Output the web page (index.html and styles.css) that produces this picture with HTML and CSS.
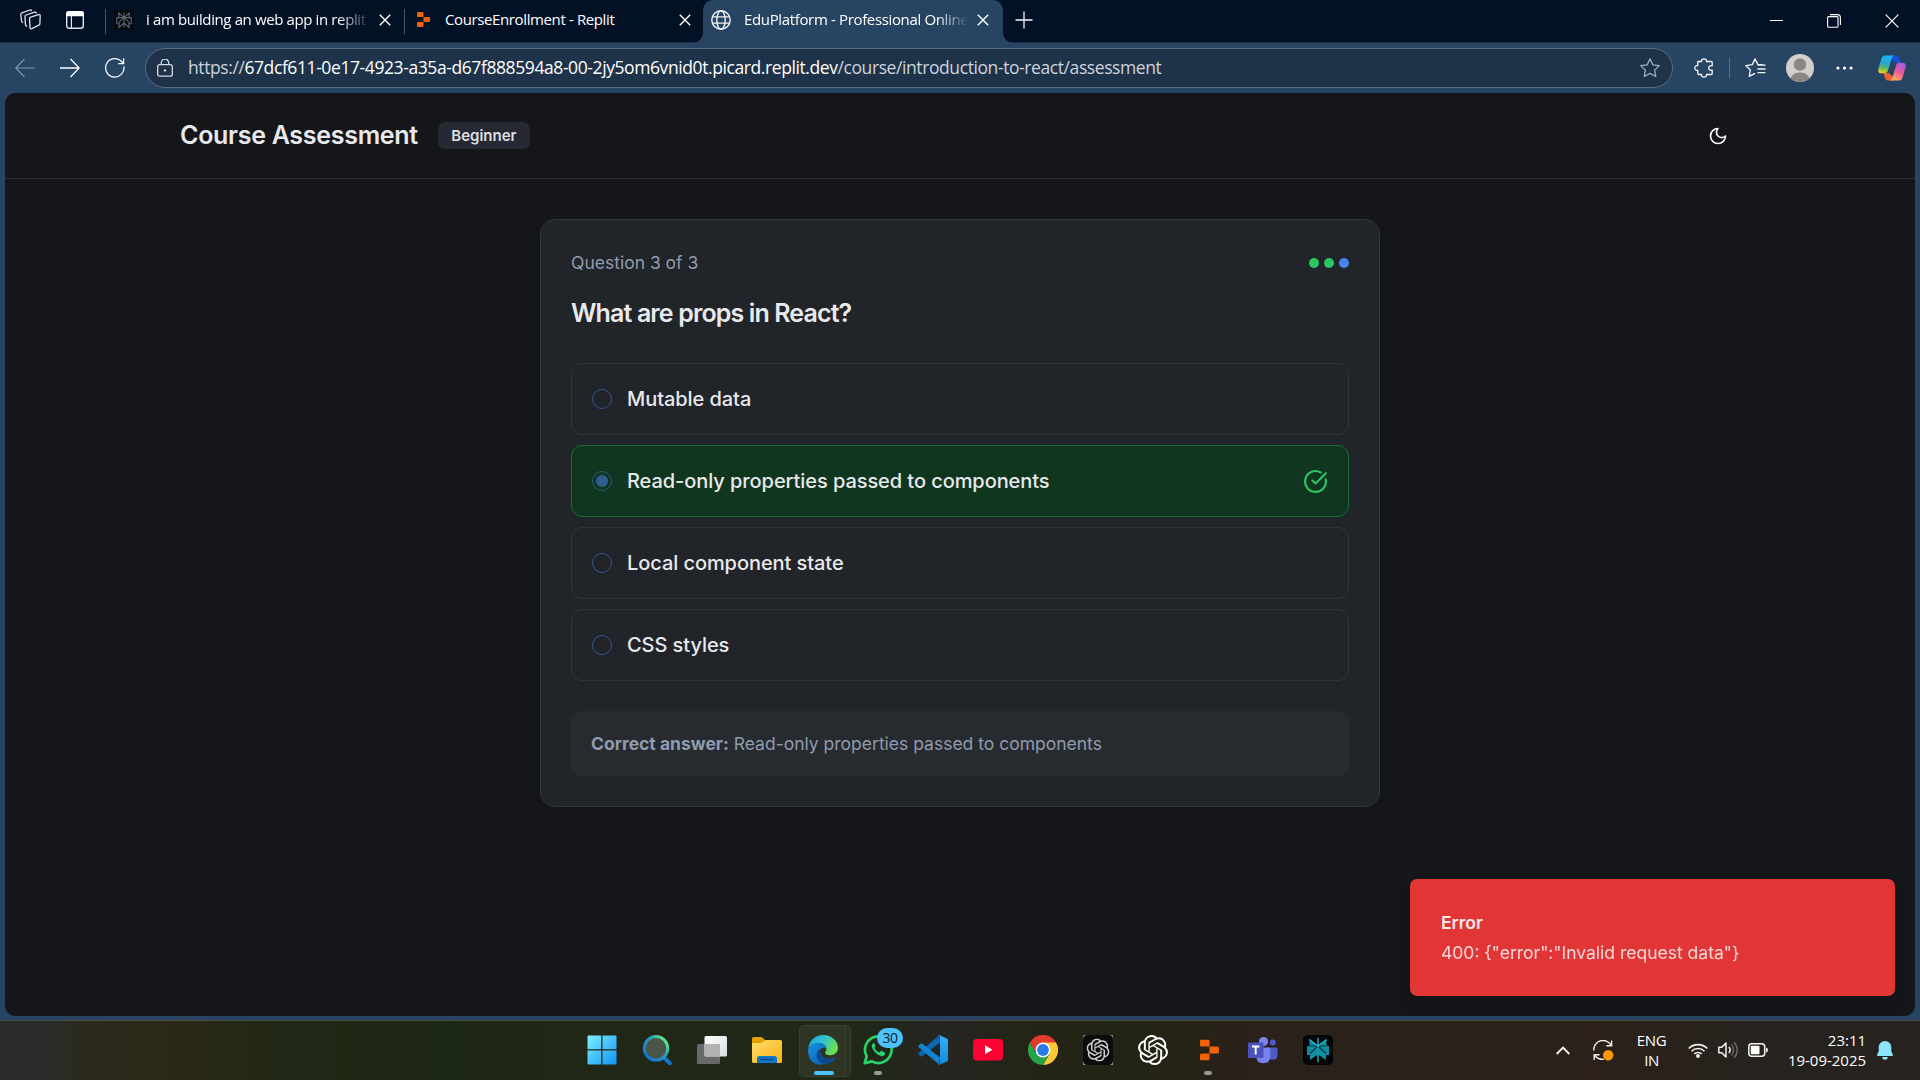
FILE: index.html
```html
<!DOCTYPE html>
<html lang="en">
<head>
<meta charset="utf-8">
<title>EduPlatform - Professional Online Learning</title>
<link rel="stylesheet" href="styles.css">
</head>
<body>
<svg class="defs" width="0" height="0" aria-hidden="true">
  <defs>
    <symbol id="x" viewBox="0 0 12 12"><path d="M.8.8l10.400 10.400M11.200.8L.8 11.200" fill="none" stroke="currentColor" stroke-width="1.400"/></symbol>
    <symbol id="replit" viewBox="0 0 19 21"><path d="M1.500 0H8a1.500 1.500 0 0 1 1.500 1.500V7H1.500A1.500 1.500 0 0 1 0 5.500v-4A1.500 1.500 0 0 1 1.500 0zM9.500 7h8A1.500 1.500 0 0 1 19 8.500v4a1.500 1.500 0 0 1-1.500 1.500h-8zM1.500 14h8v5.500A1.500 1.500 0 0 1 8 21H1.500A1.500 1.500 0 0 1 0 19.500v-4A1.500 1.500 0 0 1 1.500 14z" fill="#f26207"/></symbol>
    <symbol id="knot" viewBox="0 0 24 24"><path fill="currentColor" d="M22.2819 9.8211a5.9847 5.9847 0 0 0-.5157-4.9108 6.0462 6.0462 0 0 0-6.5098-2.9A6.0651 6.0651 0 0 0 4.9807 4.1818a5.9847 5.9847 0 0 0-3.9977 2.9 6.0462 6.0462 0 0 0 .7427 7.0966 5.98 5.98 0 0 0 .511 4.9107 6.051 6.051 0 0 0 6.5146 2.9001A5.9847 5.9847 0 0 0 13.2599 24a6.0557 6.0557 0 0 0 5.7718-4.2058 5.9894 5.9894 0 0 0 3.9977-2.9001 6.0557 6.0557 0 0 0-.7475-7.0729zm-9.022 12.6081a4.4755 4.4755 0 0 1-2.8764-1.0408l.1419-.0804 4.7783-2.7582a.7948.7948 0 0 0 .3927-.6813v-6.7369l2.02 1.1686a.071.071 0 0 1 .038.052v5.5826a4.504 4.504 0 0 1-4.4945 4.4944zm-9.6607-4.1254a4.4708 4.4708 0 0 1-.5346-3.0137l.142.0852 4.783 2.7582a.7712.7712 0 0 0 .7806 0l5.8428-3.3685v2.3324a.0804.0804 0 0 1-.0332.0615L9.74 19.9502a4.4992 4.4992 0 0 1-6.1408-1.6464zM2.3408 7.8956a4.485 4.485 0 0 1 2.3655-1.9728V11.6a.7664.7664 0 0 0 .3879.6765l5.8144 3.3543-2.0201 1.1685a.0757.0757 0 0 1-.071 0l-4.8303-2.7865A4.504 4.504 0 0 1 2.3408 7.872zm16.5963 3.8558L13.1038 8.364 15.1192 7.2a.0757.0757 0 0 1 .071 0l4.8303 2.7913a4.4944 4.4944 0 0 1-.6765 8.1042v-5.6772a.79.79 0 0 0-.407-.667zm2.0107-3.0231l-.142-.0852-4.7735-2.7818a.7759.7759 0 0 0-.7854 0L9.409 9.2297V6.8974a.0662.0662 0 0 1 .0284-.0615l4.8303-2.7866a4.4992 4.4992 0 0 1 6.6802 4.66zM8.3065 12.863l-2.02-1.1638a.0804.0804 0 0 1-.038-.0567V6.0742a4.4992 4.4992 0 0 1 7.3757-3.4537l-.142.0805L8.704 5.459a.7948.7948 0 0 0-.3927.6813zm1.0976-2.3654l2.602-1.4998 2.6069 1.4998v2.9994l-2.5974 1.4997-2.6067-1.4997Z"/></symbol>
  </defs>
</svg>

<header class="tabstrip">
  <svg class="workspaces" width="21" height="21" viewBox="0 0 21 21" fill="none" stroke="#dde3ea" stroke-width="1.300" stroke-linejoin="round" stroke-linecap="round"><path d="M9.500 9.700q0-1.200 1.100-1.500l8.100-2.600q1.600-.3 1.500 1l-.3 7.800q0 1.200-1.100 1.700l-6.800 3.500q-2 .7-2-1z"/><path d="M6.600 17.200q-1.200-.6-1.200-2L5 7.600q0-1.200 1.100-1.600l8.600-2.800q1.200-.3 1.600.8"/><path d="M2.500 13.500q-1-.5-1-1.700L.8 5.500q0-1.200 1.100-1.600L10 1q1.200-.3 1.600.7"/></svg>
  <svg class="tabmenu" width="18" height="18" viewBox="0 0 18 18"><rect x=".7" y=".7" width="16.600" height="16.600" rx="2.500" fill="none" stroke="#dfe5ec" stroke-width="1.400"/><path d="M0 5.300V3a3 3 0 0 1 3-3h12a3 3 0 0 1 3 3v2.300z" fill="#fff"/><path d="M5.400 5v12" stroke="#dfe5ec" stroke-width="1.200"/></svg>
  <i class="sep"></i>
  <div class="tab tab-first">
    <svg class="favicon" width="20" height="20" viewBox="0 0 20 20"><rect width="20" height="20" rx="1.500" fill="#060a11"/><path d="M10 2.500v15M4.800 3l5.200 4.600L15.200 3v4.600H4.800zM2.800 7.600h14.400v6.200h-2.300M2.800 7.600v6.200h2.300M10 7.600l-4.900 4.600v5.200L10 13M10 7.600l4.900 4.600v5.200L10 13" fill="none" stroke="#5f646b" stroke-width="1.100"/></svg>
    <span class="tab-title fade t1">i am building an web app in replit</span>
    <svg class="close" width="12" height="12"><use href="#x"/></svg>
  </div>
  <i class="sep"></i>
  <div class="tab tab-second">
    <svg class="favicon" width="13" height="15" viewBox="0 0 19 21" preserveAspectRatio="none"><use href="#replit" width="19" height="21"/></svg>
    <span class="tab-title t2">CourseEnrollment - Replit</span>
    <svg class="close" width="12" height="12"><use href="#x"/></svg>
  </div>
  <div class="tab tab-active">
    <svg class="favicon" width="20" height="20" viewBox="0 0 20 20" fill="none" stroke="#f0f3f6" stroke-width="1.400"><circle cx="10" cy="10" r="9.200"/><ellipse cx="10" cy="10" rx="4.200" ry="9.200"/><path d="M1.600 6.900h16.800M1.600 13.100h16.800"/></svg>
    <span class="tab-title fade t3">EduPlatform - Professional Online</span>
    <svg class="close" width="12" height="12"><use href="#x"/></svg>
  </div>
  <svg class="newtab" width="18" height="18" viewBox="0 0 18 18"><path d="M9 .5v17M.5 9h17" stroke="#f2f5f8" stroke-width="1.300"/></svg>
  <div class="window-buttons">
    <svg width="13" height="13" viewBox="0 0 13 13"><path d="M0 5.500h13" stroke="#fff" stroke-width="1"/></svg>
    <svg width="14" height="14" viewBox="0 0 14 14" fill="none" stroke="#fff"><rect x=".6" y="2.600" width="10.400" height="10.600" rx="1" stroke-width="1.100"/><path d="M3 .6h7.400a3 3 0 0 1 3 3V11" stroke-width="1.100"/></svg>
    <svg width="14" height="14" viewBox="0 0 14 14"><path d="M.7.7l12.600 12.600M13.300.7L.7 13.300" stroke="#fff" stroke-width="1.200"/></svg>
  </div>
</header>

<nav class="toolbar">
  <svg width="20" height="20" viewBox="0 0 20 20" fill="none" stroke="#7e93a6" stroke-width="1.200"><path d="M9.500 1L.8 10l8.700 9M.8 10H20"/></svg>
  <svg width="20" height="20" viewBox="0 0 20 20" fill="none" stroke="#fff" stroke-width="1.300"><path d="M10.500 1l8.700 9-8.700 9M19.200 10H0"/></svg>
  <svg width="20" height="20" viewBox="0 0 20 20" fill="none" stroke="#f5f7f9" stroke-width="1.300"><path d="M18.900 8.300A9.200 9.200 0 1 1 15.500 2.600l2.700 2.700M18.600.2v5.400h-5.400"/></svg>
  <div class="address">
    <svg width="16" height="18" viewBox="0 0 16 18" fill="none" stroke="#d4dae1" stroke-width="1.300"><rect x=".7" y="5.700" width="14.600" height="11.500" rx="2"/><path d="M4.300 5.500V3.800a3.500 3.500 0 0 1 7.400 0v1.700"/><circle cx="8" cy="11.400" r="1.200" fill="#d4dae1" stroke="none"/></svg>
    <span class="url"><span class="dim">https://</span>67dcf611-0e17-4923-a35a-d67f888594a8-00-2jy5om6vnid0t.picard.replit.dev<span class="dim">/course/introduction-to-react/assessment</span></span>
    <svg class="star" width="20" height="20" viewBox="0 0 20 20" fill="none" stroke="#a3adb9" stroke-width="1.300" stroke-linejoin="round"><path d="M10 .9l2.800 5.900 6.500.8-4.700 4.500 1.200 6.400L10 15.400l-5.800 3.100 1.200-6.400L.7 7.600l6.500-.8z"/></svg>
  </div>
  <svg class="puzzle" width="20" height="20" viewBox="0 0 20 20" fill="none" stroke="#f2f5f8" stroke-width="1.300" stroke-linejoin="round"><path d="M3.800 3.500h3.700C7.300 1.600 8.500.8 10 .8s2.700.8 2.500 2.700h4.700q1 0 1 1v3.300c-2-.4-3.500.5-3.500 2.200s1.500 2.600 3.500 2.200v3.300q0 1-1 1h-4.700c.2 1.900-1 2.700-2.500 2.700s-2.700-.8-2.500-2.700H4.800q-1 0-1-1v-3c-2 .2-3-1-3-2.500s1-2.700 3-2.500z"/></svg>
  <i class="tool-sep"></i>
  <svg class="favs" width="21" height="20" viewBox="0 0 21 20" fill="none" stroke="#f2f5f8" stroke-width="1.300" stroke-linejoin="round"><path d="M18.500 6.800l-5.700-.4L10 .9 7.300 6.600.7 7.600l4.700 4.300-1.100 6.500 5.700-3M12.500 7.200h8M12.500 11h8M12.500 14.600h8"/></svg>
  <svg class="avatar" width="28" height="28" viewBox="0 0 28 28"><defs><clipPath id="av"><circle cx="14" cy="14" r="14"/></clipPath></defs><g clip-path="url(#av)"><path fill="#d1cfcd" d="M0 0h28v28H0z"/><circle cx="14" cy="10.500" r="6.200" fill="#8b8683"/><ellipse cx="14" cy="27" rx="10.200" ry="8.500" fill="#8b8683"/></g></svg>
  <svg class="more" width="17" height="4" viewBox="0 0 17 4" fill="#fff"><circle cx="1.900" cy="2" r="1.600"/><circle cx="8.500" cy="2" r="1.600"/><circle cx="15.100" cy="2" r="1.600"/></svg>
  <svg class="copilot" width="28" height="26" viewBox="0 0 28 26">
    <defs>
      <linearGradient id="ca" x1=".4" y1="0" x2=".2" y2="1"><stop stop-color="#17b3f5"/><stop offset=".45" stop-color="#2aa7c9"/><stop offset=".7" stop-color="#67bb58"/><stop offset="1" stop-color="#f8d21c"/></linearGradient>
      <linearGradient id="cb" x1=".8" y1="0" x2=".4" y2="1"><stop stop-color="#9d5be8"/><stop offset=".5" stop-color="#ea57a0"/><stop offset="1" stop-color="#ffab5c"/></linearGradient>
    </defs>
    <path d="M13 .5h5q2.300 0 3 2.200L22.600 8H18l-6-5z" fill="#1d50d6"/>
    <path d="M15 25.500h-5q-2.200 0-2.800-2.200L5.500 18H11l4 4z" fill="#f2612c"/>
    <path d="M6.500.5h10q-2 .3-2.700 2.600l-4 13Q9.100 18.200 7 18.300H3.500Q-.5 18.200.4 14L3.300 4Q4.200.6 6.500.5z" fill="url(#ca)"/>
    <path d="M21.500 25.500h-10q2-.3 2.700-2.600l4-13q.7-2.100 2.800-2.200h3.500q4 .1 3.100 4.300L24.700 22q-.9 3.400-3.200 3.500z" fill="url(#cb)"/>
  </svg>
</nav>

<main class="frame">
  <div class="page">
    <div class="page-header">
      <h1>Course Assessment</h1>
      <span class="level">Beginner</span>
      <svg class="moon" width="20" height="20" viewBox="0 0 24 24" fill="none" stroke="#f4f5f7" stroke-width="2" stroke-linecap="round" stroke-linejoin="round"><path d="M12 3a6 6 0 0 0 9 9 9 9 0 1 1-9-9Z"/></svg>
    </div>
    <section class="card">
      <div class="progress">
        <span>Question 3 of 3</span>
        <div class="dots"><i class="dot done"></i><i class="dot done"></i><i class="dot current"></i></div>
      </div>
      <h2>What are props in React?</h2>
      <div class="options">
        <div class="option"><i class="radio"></i><span>Mutable data</span></div>
        <div class="option correct"><i class="radio checked"></i><span>Read-only properties passed to components</span>
          <svg class="tick" width="25" height="25" viewBox="0 0 24 24" fill="none" stroke="#2cc765" stroke-width="2" stroke-linecap="round" stroke-linejoin="round"><path d="M21.801 10A10 10 0 1 1 17 3.335"/><path d="m9 11 3 3L22 4"/></svg>
        </div>
        <div class="option"><i class="radio"></i><span>Local component state</span></div>
        <div class="option"><i class="radio"></i><span>CSS styles</span></div>
      </div>
      <p class="answer"><strong>Correct answer:</strong> Read-only properties passed to components</p>
    </section>
    <div class="toast" role="alert">
      <div class="toast-title">Error</div>
      <div class="toast-text">400: {"error":"Invalid request data"}</div>
    </div>
  </div>
</main>

<footer class="taskbar">
  <div class="apps">
    <div class="app"><svg width="30" height="30" viewBox="0 0 30 30"><defs><linearGradient id="win" x1="0" y1="0" x2="1" y2="1"><stop stop-color="#7df0ff"/><stop offset="1" stop-color="#0f93f5"/></linearGradient></defs><path d="M1.500.5H14.300V14.300H.5V1.500a1 1 0 0 1 1-1zM15.500.5h13a1 1 0 0 1 1 1v12.800h-14zM.5 15.500h13.800v14H1.500a1 1 0 0 1-1-1zM15.500 15.500h14v13a1 1 0 0 1-1 1h-13z" fill="url(#win)"/></svg></div>
    <div class="app"><svg width="30" height="30" viewBox="0 0 30 30"><defs><linearGradient id="se" x1="1" y1="0" x2=".1" y2=".8"><stop offset=".1" stop-color="#6df08a"/><stop offset=".45" stop-color="#2a9fb9"/><stop offset="1" stop-color="#1279da"/></linearGradient></defs><path d="M21.500 22l6.300 6.300" stroke="#1773c9" stroke-width="4" stroke-linecap="round"/><circle cx="14" cy="13.300" r="11.700" fill="#4b5547" stroke="url(#se)" stroke-width="3"/></svg></div>
    <div class="app"><svg width="30" height="30" viewBox="0 0 30 30"><defs><linearGradient id="tv" x1="0" y1="0" x2="1" y2="1"><stop stop-color="#fff"/><stop offset="1" stop-color="#dcdcdc"/></linearGradient></defs><rect y="9" width="23" height="20" rx="1.500" fill="#69686a"/><rect x="7.500" y="1" width="22.500" height="20.500" rx="1.500" fill="url(#tv)"/><path d="M7.500 9H23v12.500H9q-1.500 0-1.500-1.500z" fill="#b3b2b3"/></svg></div>
    <div class="app"><svg width="30" height="30" viewBox="0 0 30 30"><defs><linearGradient id="fo" x1="0" y1="0" x2="1" y2="1"><stop stop-color="#ffdc6b"/><stop offset="1" stop-color="#f8b216"/></linearGradient></defs><path d="M0 3.500Q0 2 1.500 2H9q1 0 1.700.7L13 5v5H0z" fill="#e0a000"/><path d="M0 8h8.500q1.500 0 2.500-1l1.500-1.400q.6-.6 1.500-.6h14.500Q30 5 30 6.500v20q0 1.500-1.500 1.500h-27Q0 28 0 26.500z" fill="url(#fo)"/><path d="M5 28v-4.500Q5 21 7.500 21h15q2.500 0 2.500 2.500V28z" fill="#1276c6"/><path d="M8.500 24.500h13" stroke="#064b88" stroke-width="1.400" stroke-linecap="round"/></svg></div>
    <div class="app running active"><svg width="30" height="30" viewBox="0 0 30 30"><defs><linearGradient id="ea" x1="0" y1="0" x2="1" y2=".5"><stop stop-color="#1b9de2"/><stop offset=".5" stop-color="#2fc4d2"/><stop offset="1" stop-color="#6ae04e"/></linearGradient><linearGradient id="eb" x1="0" y1="0" x2="1" y2="1"><stop stop-color="#1593e4"/><stop offset="1" stop-color="#0c59a4"/></linearGradient></defs><path d="M.3 13.500C1.200 5.500 7.300.1 15 .1c8.700 0 15 6.200 15 12.700 0 4.800-3.700 7.400-7.700 7.400-3.500 0-5.300-1.100-5.300-2.400 0-.9 1.400-1.400 1.400-3.800 0-3.300-3-6-7.600-6C6.200 8 2 10.300.3 13.500z" fill="url(#ea)"/><path d="M.1 15.500C.1 11.500 4.800 8 10.500 8c4.800 0 7.900 2.700 7.900 6-1.500-2.400-6.800-1.500-7.500 3.500-.5 5 3.600 9.900 10.600 8.700-5 4.700-12.500 4.600-17 .6C1.600 24.100 0 19.800.1 15.500z" fill="url(#eb)"/><path d="M12.300 13.500c-3.600 2.600-5.100 7.300-2.500 11.300 3.600 5.400 12.300 5.500 17.800-1.300.7-.9-.1-1.500-1-1-5.200 2.500-14.700 1.600-14.300-9z" fill="#114a91"/></svg></div>
    <div class="app idle"><svg width="30" height="30" viewBox="0 0 30 30" fill="none" stroke="#25d366"><path d="M1.800 28.200l1.900-7A13.300 13.300 0 1 1 9 26.400z" stroke-width="2.700" stroke-linejoin="round"/><path d="M10.200 8.200c-1.700 1-1.900 3.100-.8 5.300 1.700 3.700 5 6.700 8.800 7.600 1.900.4 3.700-.7 3.900-2.600.1-.8-.2-1-.8-1.300l-2.400-1.200c-.6-.3-1-.1-1.300.3l-1 1.200c-2.200-.8-4-2.400-5.200-4.600l.9-1.200c.2-.4.2-.7 0-1.100l-1-2.400z" fill="#25d366" stroke="none"/></svg><span class="badge">30</span></div>
    <div class="app"><svg width="30" height="30" viewBox="0 0 30 30"><defs><linearGradient id="vs" x1="0" y1="0" x2="0" y2="1"><stop stop-color="#35b1f5"/><stop offset="1" stop-color="#158bdb"/></linearGradient></defs><path d="M22 7.500L4.300 21.200q-.8.600-1.600 0L.7 19.500q-.9-.8 0-1.700L21 .5z" fill="#0b67b0"/><path d="M22 22.500L4.300 8.800q-.8-.6-1.600 0L.7 10.500q-.9.800 0 1.700L21 29.500z" fill="#1284cf"/><path d="M21.400.3l7.500 3.200q1.100.6 1.100 1.800v19.400q0 1.200-1.100 1.800l-7.500 3.200q-.8.200-1.400-.5 2 .5 2-1.700V2.500q0-2.200-2-1.700.6-.7 1.400-.5z" fill="url(#vs)"/></svg></div>
    <div class="app"><svg width="30" height="22" viewBox="0 0 30 22"><rect width="30" height="21.500" rx="4" fill="#ff0033"/><path d="M12 6.300v9l7.500-4.500z" fill="#fff"/></svg></div>
    <div class="app"><svg width="30" height="30" viewBox="0 0 30 30"><path d="M15 15L2 7.500A15 15 0 0 1 28 7.500z" fill="#e33b2e"/><path d="M15 7.500h13A15 15 0 0 1 15 30l6.500-11.300z" fill="#fcc934"/><path d="M21.500 18.700L15 30A15 15 0 0 1 2 7.500l6.500 11.200z" fill="#25a34b"/><path d="M2 7.500h13v7.500H6z" fill="#e33b2e"/><circle cx="15" cy="15" r="7.500" fill="#fff"/><circle cx="15" cy="15" r="5.900" fill="#287be9"/></svg></div>
    <div class="app"><svg width="30" height="30" viewBox="0 0 30 30" color="#cfcfcf"><path fill="#8a8a8a" d="M0 0h30v30H0z"/><rect width="30" height="30" rx="4.500" fill="#0c0c0c"/><use href="#knot" x="3.500" y="3.500" width="23" height="23"/></svg></div>
    <div class="app"><svg width="30" height="30" viewBox="0 0 24 24" color="#fff"><use href="#knot"/></svg></div>
    <div class="app idle"><svg class="replit-app" width="19" height="22" viewBox="0 0 19 21"><use href="#replit"/></svg></div>
    <div class="app"><svg width="30" height="27" viewBox="0 0 30 27"><circle cx="24.700" cy="5.500" r="3" fill="#5059c9"/><path d="M19 10.500h9.300q1.200 0 1.200 1.200v6.500q0 4.500-5 4.500-4 0-5.500-3.500z" fill="#5059c9"/><circle cx="15.500" cy="4.600" r="4.600" fill="#7b83eb"/><path d="M9 10.500h12q1.300 0 1.300 1.300v7.500q0 7-7 7t-7-7z" fill="#7b83eb"/><rect y="5.500" width="15.500" height="15.500" rx="1.300" fill="#4a52bd"/><path d="M4 9.500h7.400M7.700 9.500v8" stroke="#fff" stroke-width="1.900"/></svg></div>
    <div class="app"><svg width="30" height="30" viewBox="0 0 30 30"><rect width="30" height="30" rx="5" fill="#020406"/><path d="M6.500 4.500L15 11l8.500-6.500V11H26v9h-3v5l-8-5.500L7 25v-5H4v-9h2.500z" fill="#0d8ea1"/><path d="M15 2.500V27.500M15 11l-8 7.500M15 11l8 7.500M6.500 11h17" stroke="#04343f" stroke-width="1.200"/><path d="M6.500 4.500L15 11l8.500-6.500M15 3v24" stroke="#22c3d6" stroke-width="1.200" fill="none"/></svg></div>
  </div>
  <div class="tray">
    <svg width="14" height="9" viewBox="0 0 14 9" fill="none" stroke="#f5f5f5" stroke-width="1.800"><path d="M.7 8L7 1.500 13.300 8"/></svg>
    <svg class="sync" width="21" height="21" viewBox="0 0 21 21" fill="none" stroke="#eee" stroke-width="1.400"><path d="M.8 10.500A9.200 9.200 0 0 1 18 5.200M18.600.5v5.300h-5.300M6.500 14.700H1.200V20M1.500 15.200Q5 19.700 11 19.300"/><circle cx="15.200" cy="15.300" r="5.200" fill="#ff9a06" stroke="none"/></svg>
    <div class="lang"><span>ENG</span><span>IN</span></div>
    <svg class="wifi" width="20" height="16" viewBox="0 0 20 16" fill="none" stroke="#f2f2f2" stroke-width="1.600"><path d="M.7 6.500a13.200 13.200 0 0 1 18.600 0M3.500 9.200a9.200 9.200 0 0 1 13 0M6.200 12a5.400 5.400 0 0 1 7.600 0"/><circle cx="10" cy="14" r="1.900" fill="#fff" stroke="none"/></svg>
    <svg class="volume" width="20" height="18" viewBox="0 0 20 18" fill="none" stroke="#f2f2f2" stroke-width="1.500" stroke-linejoin="round"><path d="M.8 6.300h3L8 2v14l-4.200-4.300h-3z"/><path d="M10.800 6a4.500 4.500 0 0 1 0 6"/><path d="M13.300 3.500a8 8 0 0 1 0 11M16 1.200a11 11 0 0 1 0 15.600" stroke="#666"/></svg>
    <svg class="battery" width="20" height="14" viewBox="0 0 20 14"><rect x=".8" y=".8" width="15.900" height="12.400" rx="3" fill="none" stroke="#f2f2f2" stroke-width="1.500"/><rect x="2.700" y="2.700" width="8.800" height="8.600" rx="1" fill="#fff"/><path d="M18 4.500q2 .5 2 2.500t-2 2.500z" fill="#f2f2f2"/></svg>
    <div class="clock"><span>23:11</span><span>19-09-2025</span></div>
    <svg class="bell" width="16" height="19" viewBox="0 0 16 19" fill="#8be6fd"><path d="M8 0a6.300 6.300 0 0 1 6.300 6.300v3.900l1.600 3.500q.3 1.300-.9 1.300H1q-1.200 0-.9-1.300l1.600-3.500V6.300A6.300 6.300 0 0 1 8 0zM5.300 16h5.400a2.700 2.700 0 0 1-5.400 0z"/></svg>
  </div>
</footer>
</body>
</html>
```

FILE: styles.css
```css
* { box-sizing: border-box; }

body {
  margin: 0;
  width: 1920px;
  height: 1080px;
  overflow: hidden;
  display: flex;
  flex-direction: column;
  background: #274562;
  font-family: "Open Sans", "Noto Sans", sans-serif;
}

svg { display: block; flex: none; }
.defs { position: absolute; }
i { display: block; flex: none; }

/* Tab strip */
.tabstrip {
  flex: none;
  height: 43px;
  padding: 0 21px 3px 20px;
  display: flex;
  align-items: center;
  background: #031126;
  border-bottom: 1px solid #1b2f49;
  color: #fff;
}
.tabmenu { margin-left: 25px; }
.sep { width: 1px; height: 25px; background: #4a5567; margin-left: 21px; margin-top: 3px; }
.tab { display: flex; align-items: center; height: 40px; flex: none; }
.tab-title { font-size: 15px; white-space: nowrap; line-height: 22px; flex: none; padding-bottom: 1px; }
.fade { mask-image: linear-gradient(90deg, #000 86%, transparent 101%); }
.t1, .t3 { width: 223px; }
.t1 { letter-spacing: -0.38px; }
.t2 { width: 221px; letter-spacing: -0.38px; }
.t3 { letter-spacing: -0.35px; }
.tab-first { width: 298px; padding-left: 8px; }
.tab-first .tab-title { margin-left: 12px; }
.tab-first .close { margin-left: 10px; }
.tab-first + .sep { margin-left: 0; }
.tab-second { width: 298px; padding-left: 12px; }
.tab-second .tab-title { margin-left: 15px; }
.tab-second .close { margin-left: 13px; }
.tab-active {
  width: 300px;
  height: 43px;
  margin: 3px 0 0;
  padding: 0 0 3px 8px;
  position: relative;
  background: #274562;
  border-radius: 10px 10px 0 0;
}
.tab-active::before,
.tab-active::after {
  content: "";
  position: absolute;
  bottom: 0;
  width: 10px;
  height: 10px;
}
.tab-active::before { left: -10px; background: radial-gradient(circle at 0 0, transparent 9.500px, #274562 10px); }
.tab-active::after { right: -10px; background: radial-gradient(circle at 100% 0, transparent 9.500px, #274562 10px); }
.tab-active .tab-title { margin-left: 13px; }
.tab-active .close { margin-left: 10px; }
.newtab { margin-left: 12px; }
.window-buttons { margin-left: auto; display: flex; align-items: center; gap: 44px; padding-top: 3px; }

/* Toolbar */
.toolbar {
  flex: none;
  height: 50px;
  padding: 0 13px 0 15px;
  display: flex;
  align-items: center;
  gap: 25px;
}
.address {
  width: 1528px;
  height: 40px;
  margin-left: -5px;
  padding: 0 12px 0 11px;
  display: flex;
  align-items: center;
  background: #1e3249;
  border: 1px solid #5b6d81;
  border-radius: 20px;
}
.url { margin-left: 15px; padding-bottom: 2px; font-size: 17.500px; letter-spacing: -0.41px; color: #fff; white-space: nowrap; }
.dim { color: #cdd4dc; }
.star { margin-left: auto; }
.puzzle { margin-left: -4px; }
.tool-sep { width: 1px; height: 20px; background: #587089; margin: 0 -10px; }
.avatar { margin-left: -5px; }
.more { margin-left: -3px; }
.copilot { margin-left: 0; }

/* Web page */
.frame { flex: none; height: 927px; padding: 0 5px 4px; }
.page {
  position: relative;
  height: 923px;
  overflow: hidden;
  background: #151619;
  border-radius: 10px;
  color: #e8e9ec;
  font-family: Inter, sans-serif;
}
.page-header {
  height: 86px;
  padding: 0 187px 0 175px;
  display: flex;
  align-items: center;
  border-bottom: 1px solid #2b2d32;
}
h1 { margin: 0; font-size: 25px; font-weight: 600; line-height: 35px; letter-spacing: -0.29px; white-space: nowrap; }
.level {
  margin-left: 20px;
  width: 92px;
  height: 27px;
  border-radius: 7px;
  background: #262932;
  display: flex;
  align-items: center;
  justify-content: center;
  font-size: 15px;
  font-weight: 600;
  color: #dddfe4;
}
.moon { margin-left: auto; }

.card {
  width: 840px;
  height: 588px;
  margin: 40px auto 0;
  padding: 30px;
  background: #212428;
  border: 1px solid #33363c;
  border-radius: 15px;
}
.progress { display: flex; justify-content: space-between; align-items: center; height: 26px; font-size: 17.500px; color: #8f9bae; }
.progress span { padding-bottom: 2px; }
.dots { display: flex; gap: 5px; }
.dot { width: 10px; height: 10px; border-radius: 50%; }
.done { background: #2cc765; }
.current { background: #4a82f0; }
h2 { margin: 19px 0 31px; font-size: 25px; line-height: 37px; font-weight: 600; letter-spacing: -0.88px; white-space: nowrap; }
.options { display: flex; flex-direction: column; gap: 10px; }
.option {
  height: 72px;
  padding: 0 20px;
  display: flex;
  align-items: center;
  gap: 15px;
  border: 1px solid #2f3237;
  border-radius: 11px;
  font-size: 20px;
  font-weight: 500;
  letter-spacing: -0.07px;
}
.radio { width: 20px; height: 20px; border: 1px solid #345499; border-radius: 50%; }
.correct { background: #10361f; border-color: #1a6c38; }
.checked { border-color: #2a5a82; display: flex; align-items: center; justify-content: center; }
.checked::after { content: ""; width: 12px; height: 12px; border-radius: 50%; background: #2d5f8e; }
.tick { margin-left: auto; }
.answer {
  margin: 30px 0 0;
  height: 65px;
  padding: 0 20px;
  line-height: 65px;
  background: #272a2e;
  border-radius: 10px;
  font-size: 17.500px;
  color: #8f9bae;
  white-space: nowrap;
}
.answer strong { font-weight: 700; }

.toast {
  position: absolute;
  right: 20px;
  bottom: 20px;
  width: 485px;
  height: 117px;
  padding: 31px;
  background: #e23636;
  border-radius: 7px;
  box-shadow: 0 12px 18px -4px rgba(0, 0, 0, .15);
  color: #fae9ea;
  font-size: 17.500px;
}
.toast-title { line-height: 25px; font-weight: 600; }
.toast-text { line-height: 25px; margin-top: 5px; opacity: .9; }

/* Taskbar */
.taskbar {
  flex: none;
  height: 60px;
  padding: 0 27px 1px 575px;
  display: flex;
  align-items: center;
  border-top: 1px solid #4a4a45;
  background: linear-gradient(90deg, #2b2b2a 0, #2b2b2a 50px, #2c2a1c 90px, #2b2916 170px, #222815 270px, #1c2713 450px, #202717 580px, #202818 860px, #262522 940px, #242418 1020px, #222413 1120px, #2a211a 1250px, #2b211a 1600px, #26231f 1800px, #26231f 100%);
  color: #fff;
}
.apps { display: flex; margin-left: -.4px; }
.app { position: relative; width: 55.100px; height: 50px; display: flex; align-items: center; justify-content: center; flex: none; }
.app > svg { position: relative; }
.active::before {
  content: "";
  position: absolute;
  left: 4px;
  top: 0;
  width: 45px;
  height: 50px;
  border-radius: 5px;
  background: #2f3525;
  border: 1px solid #3b4132;
  box-shadow: 5px 0 0 -1px #2c3223, 5px 0 0 0 #3b4132;
}
.running::after,
.idle::after {
  content: "";
  position: absolute;
  bottom: 0;
  width: 20px;
  height: 4px;
  border-radius: 2px;
  background: #4cc2ff;
}
.active::after { left: 19px; }
.idle::after { width: 8px; background: #9a9a98; }
.replit-app { margin-left: 2px; }
.badge {
  position: absolute;
  left: 27px;
  top: 3px;
  width: 26px;
  height: 20px;
  border-radius: 10px;
  background: #4cc2ff;
  color: #0c1a22;
  font-size: 14px;
  line-height: 20px;
  text-align: center;
  letter-spacing: -0.5px;
}
.tray { margin-left: auto; display: flex; align-items: center; font-size: 15px; line-height: 20px; }
.sync { margin-left: 23px; }
.lang { margin-left: 22px; width: 31px; display: flex; flex-direction: column; align-items: center; letter-spacing: -0.4px; padding-bottom: 1px; }
.wifi { margin-left: 21px; }
.volume { margin-left: 10px; }
.battery { margin-left: 10px; }
.clock { margin-left: 19px; width: 79px; display: flex; flex-direction: column; align-items: flex-end; letter-spacing: -0.02px; white-space: nowrap; padding-bottom: 1px; }
.bell { margin-left: 11px; }
```
